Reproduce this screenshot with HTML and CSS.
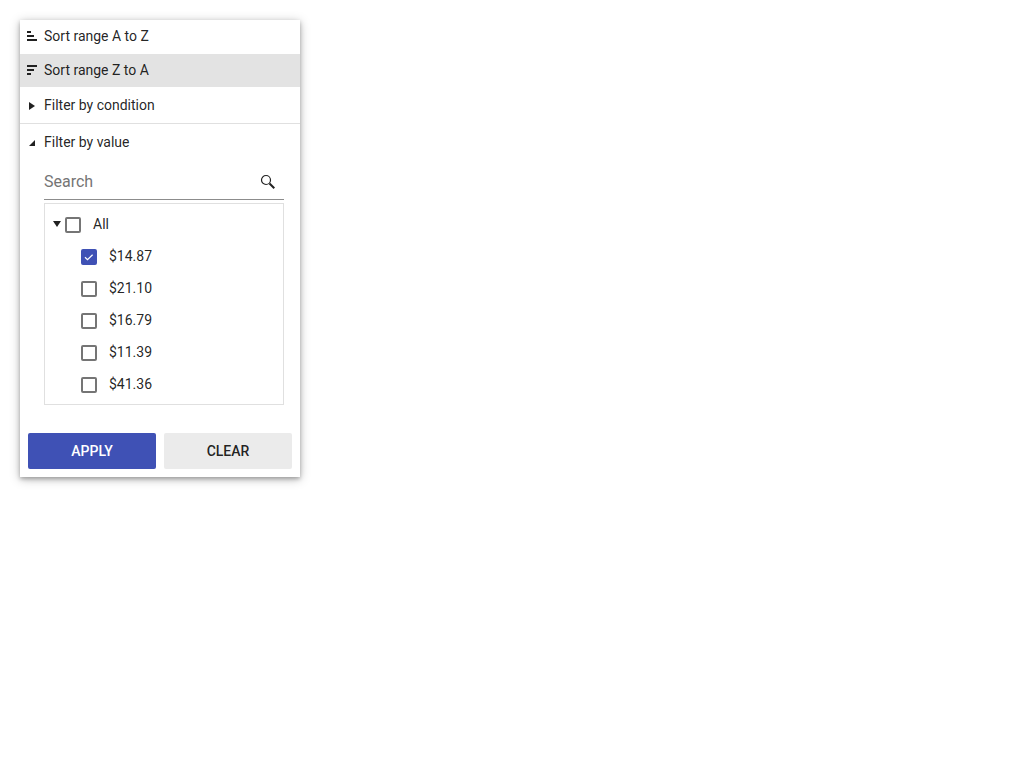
FILE: index.html
```html
<!DOCTYPE html>
<html lang="en">
<head>
<meta charset="utf-8">
<title>Filter menu</title>
<link rel="stylesheet" href="styles.css">
</head>
<body>
<form class="filter-menu">
  <button type="button" class="menu-item">
    <svg class="icon" viewBox="0 0 24 24" aria-hidden="true"><path d="M7 7h4v2H7zM7 11h7v2H7zM7 15h10v2H7z"/></svg>
    <span>Sort range A to Z</span>
  </button>
  <button type="button" class="menu-item active">
    <svg class="icon" viewBox="0 0 24 24" aria-hidden="true"><path d="M7 7h10v2H7zM7 11h7v2H7zM7 15h4v2H7z"/></svg>
    <span>Sort range Z to A</span>
  </button>
  <button type="button" class="menu-item section" aria-expanded="false">
    <svg class="icon" viewBox="0 0 24 24" aria-hidden="true"><path d="M9 9L15 13L9 17z"/></svg>
    <span>Filter by condition</span>
  </button>
  <button type="button" class="menu-item section expanded" aria-expanded="true">
    <svg class="icon" viewBox="0 0 24 24" aria-hidden="true"><path d="M15 10v6H9z"/></svg>
    <span>Filter by value</span>
  </button>
  <div class="values">
    <div class="search">
      <input type="text" class="search-input" placeholder="Search" aria-label="Search">
      <svg class="search-icon" viewBox="0 0 16 16" aria-hidden="true"><circle cx="6" cy="6" r="4.500"/><path class="handle" d="M9.500 9.500L14.300 14.300"/></svg>
    </div>
    <ul class="tree">
      <li>
        <div class="tree-row">
          <svg class="arrow" viewBox="0 0 8 6" aria-hidden="true"><path d="M0 0h8L4 6z"/></svg>
          <label class="option"><input type="checkbox" class="check"><span>All</span></label>
        </div>
        <ul class="children">
          <li class="tree-row"><label class="option"><input type="checkbox" class="check" checked><span>$14.87</span></label></li>
          <li class="tree-row"><label class="option"><input type="checkbox" class="check"><span>$21.10</span></label></li>
          <li class="tree-row"><label class="option"><input type="checkbox" class="check"><span>$16.79</span></label></li>
          <li class="tree-row"><label class="option"><input type="checkbox" class="check"><span>$11.39</span></label></li>
          <li class="tree-row"><label class="option"><input type="checkbox" class="check"><span>$41.36</span></label></li>
        </ul>
      </li>
    </ul>
  </div>
  <div class="actions">
    <button type="button" class="btn primary">APPLY</button>
    <button type="button" class="btn">CLEAR</button>
  </div>
</form>
</body>
</html>
```
FILE: styles.css
```css
* {
  box-sizing: border-box;
}

body {
  margin: 0;
  padding: 20px;
  background: #fff;
  color: rgba(0, 0, 0, 0.87);
  font: 14px/20px Roboto, sans-serif;
}

button,
input {
  margin: 0;
  color: inherit;
  font: inherit;
}

ul {
  margin: 0;
  padding: 0;
  list-style: none;
}

.filter-menu {
  width: 280px;
  max-width: 100%;
  background: #fff;
  box-shadow: 0 2px 4px rgba(0, 0, 0, 0.26), 0 2px 10px rgba(0, 0, 0, 0.26);
}

.menu-item {
  display: flex;
  align-items: center;
  width: 100%;
  padding: 6px 0;
  border: 0;
  background: none;
  text-align: left;
}

.menu-item:first-child {
  padding: 6px 0 8px;
}

.menu-item.active {
  padding: 6px 0 7px;
  background: #e3e3e3;
}

.icon {
  width: 24px;
  height: 24px;
  margin: -2px 0;
  flex: none;
  fill: #212121;
}

.menu-item.section {
  padding: 8px 0;
  border-bottom: 1px solid #e0e0e0;
}

.menu-item.expanded {
  border-bottom: 0;
}

.values {
  padding: 4px 16px 28px 24px;
}

.search {
  display: flex;
  align-items: center;
  height: 36px;
  margin-bottom: 3px;
  padding-right: 8px;
  border-bottom: 1px solid #8c8c8c;
}

.search-input {
  flex: 1;
  min-width: 0;
  padding: 0;
  border: 0;
  outline: 0;
  background: none;
  font-size: 16px;
  line-height: 24px;
}

.search-input::placeholder {
  color: #757575;
  opacity: 1;
}

.search-icon {
  width: 16px;
  height: 16px;
  fill: none;
  stroke: #212121;
  stroke-width: 1.2;
}

.search-icon .handle {
  stroke-width: 2;
}

.tree {
  padding: 4px 8px;
  border: 1px solid #e0e0e0;
}

.tree-row {
  display: flex;
  align-items: center;
  gap: 4px;
  height: 32px;
}

.children {
  padding-left: 28px;
}

.arrow {
  width: 8px;
  height: 6px;
  fill: #212121;
}

.option {
  display: flex;
  align-items: center;
  gap: 12px;
}

.check {
  appearance: none;
  width: 16px;
  height: 16px;
  margin-top: 2px;
  border: 2px solid #757575;
  border-radius: 2px;
  background: #fff;
}

.check:checked {
  border-color: #3f51b5;
  background: #3f51b5 url("data:image/svg+xml,%3Csvg xmlns='http://www.w3.org/2000/svg' viewBox='0 0 12 12'%3E%3Cpath d='M2 6.200L4.500 8.600L9.600 3.700' fill='none' stroke='white' stroke-width='1.2'/%3E%3C/svg%3E") center / 12px 12px no-repeat;
}

.actions {
  display: grid;
  grid-template-columns: 1fr 1fr;
  gap: 8px;
  padding: 0 8px 8px;
}

.btn {
  height: 36px;
  padding: 0;
  border: 0;
  border-radius: 2px;
  background: #ebebeb;
  font-weight: 500;
}

.btn.primary {
  background: #3f51b5;
  color: #fff;
}
```
